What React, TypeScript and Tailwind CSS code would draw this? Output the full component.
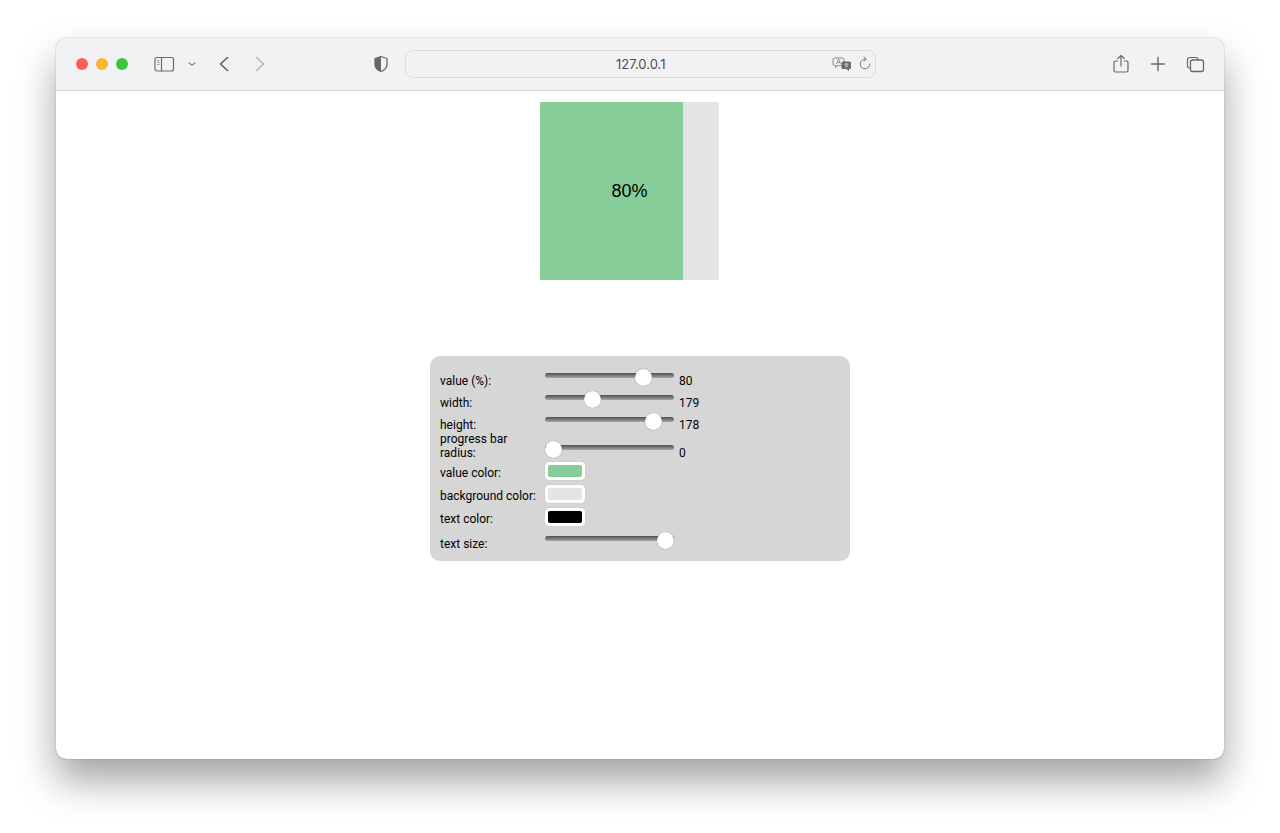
import React from 'react';

const sliders = [
  { label: 'value (%):', value: '80', left: 89.5 },
  { label: 'width:', value: '179', left: 38.5 },
  { label: 'height:', value: '178', left: 99.5 },
];

const colors = [
  { label: 'value color:', color: 'bg-[#86cd99]' },
  { label: 'background color:', color: 'bg-[#e4e4e4]' },
  { label: 'text color:', color: 'bg-black' },
];

const Slider = ({ left }: { left: number }) => (
  <div className="relative mb-[10px] h-[5px] w-[129px] rounded-full bg-gradient-to-b from-[#4f4f4f] to-[#a8a8a8]">
    <div
      className="absolute top-[-4px] h-[17px] w-[17px] rounded-full bg-white shadow-[0_0_1px_rgba(0,0,0,0.5)]"
      style={{ left }}
    />
  </div>
);

const ToolbarIcon = ({ className, children, w = 20, h = 20 }: { className?: string; children: React.ReactNode; w?: number; h?: number }) => (
  <svg width={w} height={h} viewBox={`0 0 ${w} ${h}`} fill="none" className={className}>
    {children}
  </svg>
);

const Toolbar = () => (
  <div className="flex h-[53px] shrink-0 items-center border-b border-[#d6d6d6] bg-[#f2f2f4] pl-[20px]">
    <div className="flex gap-[8px]">
      <span className="h-[12px] w-[12px] rounded-full bg-[#f95f57]" />
      <span className="h-[12px] w-[12px] rounded-full bg-[#fbb52e]" />
      <span className="h-[12px] w-[12px] rounded-full bg-[#3ac43f]" />
    </div>
    <ToolbarIcon className="ml-[26px]" w={21} h={16}>
      <rect x="1" y="1.5" width="18.5" height="13.5" rx="2" stroke="#6b6b6d" strokeWidth="1.2" />
      <path d="M7.5 1.5V15" stroke="#6b6b6d" strokeWidth="1.2" />
      <path d="M3 4.5h2.5M3 6.5h2.5M3 8.5h2.5" stroke="#9a9a9c" strokeWidth="1" />
    </ToolbarIcon>
    <ToolbarIcon className="ml-[11px]" w={12} h={10}>
      <path d="M3 4l3 2.300L9 4" stroke="#8a8a8d" strokeWidth="1.3" strokeLinecap="round" strokeLinejoin="round" />
    </ToolbarIcon>
    <ToolbarIcon className="ml-[19px]" w={14} h={18}>
      <path d="M10.5 2.500L3.500 9l7 6.500" stroke="#5f5f62" strokeWidth="1.6" strokeLinecap="round" strokeLinejoin="round" />
    </ToolbarIcon>
    <ToolbarIcon className="ml-[22px]" w={14} h={18}>
      <path d="M3.500 2.500l7 6.500-7 6.500" stroke="#b4b4b6" strokeWidth="1.6" strokeLinecap="round" strokeLinejoin="round" />
    </ToolbarIcon>
    <ToolbarIcon className="ml-[106px]" w={16} h={18}>
      <path d="M8 1.500l6 2v6c0 3.500-3 5.800-6 7-3-1.200-6-3.500-6-7v-6l6-2z" stroke="#68686b" strokeWidth="1.3" strokeLinejoin="round" />
      <path d="M8 1.500l-6 2v6c0 3.500 3 5.800 6 7V1.500z" fill="#68686b" />
    </ToolbarIcon>
    <div className="-mt-[1px] ml-[16px] flex h-[28px] w-[471px] items-center rounded-[8px] border border-[#dcdcde] pl-[32px] pr-[3px]">
      <span className="flex-1 pl-[178px] pt-[2px] font-['Inter',sans-serif] text-[13px] text-[#4d4d4f]">127.0.0.1</span>
      <ToolbarIcon w={20} h={16}>
        <path d="M2.500 2h8a1.500 1.500 0 011.500 1.500V8a1.500 1.500 0 01-1.500 1.500H6L3.500 11.500V9.500H2.500A1.500 1.500 0 011 8V3.500A1.500 1.500 0 012.500 2z" stroke="#7d7d80" strokeWidth="0.9" />
        <path d="M4.500 8l2-5 2 5M5.300 6.500h2.500" stroke="#7d7d80" strokeWidth="0.8" />
        <path d="M11 5.500h6.500a1.500 1.500 0 011.500 1.500v4.500a1.500 1.500 0 01-1.500 1.500H17v2l-2.500-2H11a1.500 1.500 0 01-1.500-1.500V7A1.500 1.500 0 0111 5.500z" fill="#69696c" />
        <path d="M12.500 8h4M14.500 7.500v1M13 11.500l3-3M13 8.500l3 3" stroke="#f2f2f4" strokeWidth="0.7" />
      </ToolbarIcon>
      <ToolbarIcon className="ml-[6px]" w={14} h={16}>
        <path d="M7 3.200a4.800 4.800 0 104.800 4.800" stroke="#77777a" strokeWidth="1" strokeLinecap="round" />
        <path d="M6 1l2.200 2.200L6 5.400" stroke="#77777a" strokeWidth="1" strokeLinecap="round" strokeLinejoin="round" />
      </ToolbarIcon>
    </div>
    <ToolbarIcon className="ml-[236px]" w={18} h={20}>
      <path d="M6 7H3.500A1.500 1.500 0 002 8.500v8A1.500 1.500 0 003.500 18h11a1.500 1.500 0 001.500-1.500v-8A1.500 1.500 0 0014.500 7H12" stroke="#68686b" strokeWidth="1.200" />
      <path d="M9 12V1.500M5.800 4.500L9 1.300l3.200 3.200" stroke="#68686b" strokeWidth="1.200" strokeLinecap="round" strokeLinejoin="round" />
    </ToolbarIcon>
    <ToolbarIcon className="ml-[19px]" w={18} h={18}>
      <path d="M9 2.500v13M2.500 9h13" stroke="#68686b" strokeWidth="1.400" strokeLinecap="round" />
    </ToolbarIcon>
    <ToolbarIcon className="ml-[18px]" w={20} h={18}>
      <path d="M5 13H4.500A2 2 0 012.500 11V4.500a2 2 0 012-2H11a2 2 0 012 2V5" stroke="#68686b" strokeWidth="1.200" />
      <rect x="5.500" y="5" width="13" height="11.500" rx="2" stroke="#68686b" strokeWidth="1.300" />
    </ToolbarIcon>
  </div>
);

const Panel = () => (
  <div className="ml-[374px] mt-[76px] w-[420px] rounded-[10px] bg-[#d6d6d6] px-[10px] py-[10px] font-['Roboto',sans-serif] text-[12px] leading-[14px] text-black">
    {sliders.map((s) => (
      <div key={s.label} className="flex h-[22px] items-end">
        <span className="w-[105px]">{s.label}</span>
        <Slider left={s.left} />
        <span className="ml-[5px]">{s.value}</span>
      </div>
    ))}
    <div className="flex h-[28px] items-end">
      <span className="w-[105px] pr-[20px]">progress bar radius:</span>
      <Slider left={0} />
      <span className="ml-[5px]">0</span>
    </div>
    {colors.map((c) => (
      <div key={c.label} className="flex h-[23px] items-center">
        <span className="w-[105px] pt-[2px]">{c.label}</span>
        <div className="-mt-[1px] h-[18px] w-[40px] rounded-[4px] bg-white p-[3px] shadow-[0_0_1px_rgba(0,0,0,0.25)]">
          <div className={`h-full w-full rounded-[2px] ${c.color}`} />
        </div>
      </div>
    ))}
    <div className="flex h-[22px] items-end">
      <span className="w-[105px]">text size:</span>
      <Slider left={111.5} />
    </div>
  </div>
);

export default function App() {
  return (
    <div className="h-[833px] w-[1280px] overflow-hidden bg-white pl-[56px] pt-[38px]">
      <div className="flex h-[721px] w-[1168px] flex-col overflow-hidden rounded-[10px] bg-white shadow-[0_0_1px_rgba(0,0,0,0.6),0_22px_38px_rgba(0,0,0,0.36)]">
        <Toolbar />
        <div className="relative ml-[484px] mt-[11px] flex h-[178px] w-[179px] items-center justify-center bg-[#e4e4e4]">
          <div className="absolute inset-y-0 left-0 w-[143px] bg-[#86cd99]" />
          <span className="relative font-['Liberation_Sans',sans-serif] text-[18px] text-black">80%</span>
        </div>
        <Panel />
      </div>
    </div>
  );
}
